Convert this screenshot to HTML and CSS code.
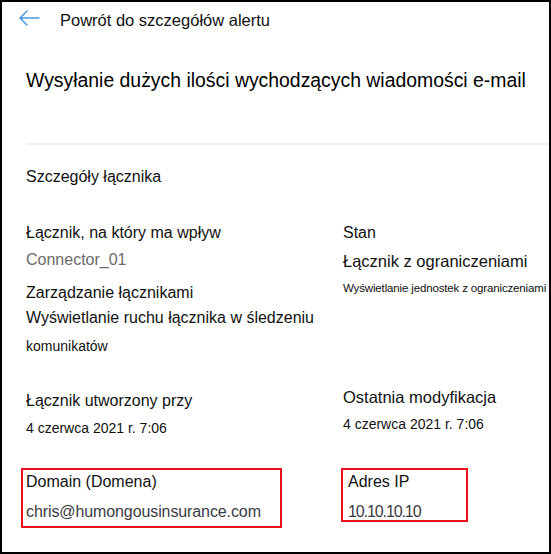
FILE: index.html
```html
<!DOCTYPE html>
<html lang="pl">
<head>
<meta charset="utf-8">
<title>Szczegóły łącznika</title>
<link rel="stylesheet" href="styles.css">
</head>
<body>
<div class="frame">
  <div class="header">
    <svg class="back" width="22" height="16" viewBox="0 0 22 16" aria-hidden="true">
      <path d="M21 8H2M9 1L2 8l7 7" fill="none" stroke="#4a9ae6" stroke-width="1.5" stroke-linecap="round" stroke-linejoin="round"/>
    </svg>
    <span class="back-text">Powrót do szczegółów alertu</span>
  </div>
  <h1 class="title">Wysyłanie dużych ilości wychodzących wiadomości e-mail</h1>
  <div class="divider"></div>
  <h2 class="section">Szczegóły łącznika</h2>

  <div class="grid row1">
    <div class="col">
      <div class="label">Łącznik, na który ma wpływ</div>
      <div class="value-gray m-connector">Connector_01</div>
      <div class="label m-manage">Zarządzanie łącznikami</div>
      <div class="label m-view">Wyświetlanie ruchu łącznika w śledzeniu</div>
      <div class="small m-kom">komunikatów</div>
    </div>
    <div class="col">
      <div class="label">Stan</div>
      <div class="label wide m-state">Łącznik z ograniczeniami</div>
      <div class="tiny m-units">Wyświetlanie jednostek z ograniczeniami</div>
    </div>
  </div>

  <div class="grid row2">
    <div class="col shift">
      <div class="label">Łącznik utworzony przy</div>
      <div class="small m-date">4 czerwca 2021 r. 7:06</div>
    </div>
    <div class="col">
      <div class="label wide">Ostatnia modyfikacja</div>
      <div class="small m-date">4 czerwca 2021 r. 7:06</div>
    </div>
  </div>

  <div class="grid row3">
    <div class="col">
      <div class="box box-domain">
        <div class="label">Domain (Domena)</div>
        <div class="value-dark m-boxval">chris@humongousinsurance.com</div>
      </div>
    </div>
    <div class="col">
      <div class="box box-ip">
        <div class="label">Adres IP</div>
        <div class="value-dark ip m-boxval">10.10.10.10</div>
      </div>
    </div>
  </div>
</div>
</body>
</html>
```

FILE: styles.css
```css
html, body {
  margin: 0;
  padding: 0;
  background: #fff;
}
body {
  font-family: "Liberation Sans", Arial, sans-serif;
  color: #000;
}
.frame {
  width: 551px;
  height: 554px;
  box-sizing: border-box;
  border: 2px solid #000;
  overflow: hidden;
}
.header {
  display: flex;
  align-items: center;
  height: 24px;
  margin-top: 6px;
  padding-left: 16px;
}
.back {
  display: block;
  margin-top: -4px;
}
.back-text {
  margin-left: 20px;
  font-size: 16.5px;
  line-height: 24px;
  color: #111;
}
.title {
  margin: 36px 0 0 24px;
  font-size: 19.4px;
  line-height: 24px;
  font-weight: normal;
  color: #000;
}
.divider {
  margin: 51px 0 0 24px;
  height: 2px;
  background: #efefef;
}
.section {
  margin: 21px 0 0 24px;
  font-size: 16px;
  line-height: 22px;
  font-weight: normal;
  color: #111;
}
.grid {
  display: grid;
  grid-template-columns: 317px 1fr;
  padding-left: 24px;
  align-items: start;
}
.col {
  min-width: 0;
}
.row1 { margin-top: 33px; }
.row2 { margin-top: 27px; }
.row3 { margin-top: 28px; }
.shift { padding-top: 4px; }
.label {
  font-size: 16px;
  line-height: 24px;
  color: #111;
}
.label.wide {
  font-size: 16.5px;
}
.value-gray {
  font-size: 16px;
  line-height: 24px;
  color: #6b6b6b;
}
.value-dark {
  font-size: 16px;
  line-height: 24px;
  color: #3c3b45;
  letter-spacing: -0.1px;
}
.value-dark.ip {
  font-size: 16px;
  letter-spacing: -1.1px;
}
.small {
  font-size: 14px;
  line-height: 24px;
  color: #111;
}
.tiny {
  font-size: 11.5px;
  line-height: 24px;
  letter-spacing: -0.15px;
  white-space: nowrap;
  color: #111;
}
.m-connector { margin-top: 3px; }
.m-manage { margin-top: 9px; }
.m-view { margin-top: 1px; }
.m-kom { margin-top: 4px; }
.m-state { margin-top: 4px; }
.m-units { margin-top: 3px; }
.m-date { margin-top: 3px; }
.box {
  border: 2px solid #e8101a;
  box-sizing: border-box;
}
.box-domain {
  width: 261px;
  height: 60px;
  margin-left: -5px;
  padding: 0 0 0 3px;
}
.box-ip {
  width: 127px;
  height: 54px;
  margin-left: -2px;
  padding: 0 0 0 5px;
}
.m-boxval { margin-top: 6px; }
```
